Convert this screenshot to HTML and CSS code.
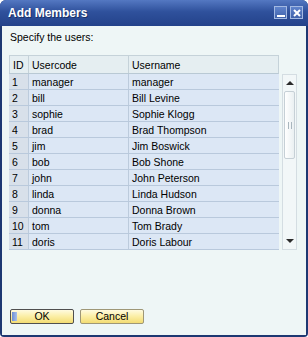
FILE: index.html
```html
<!DOCTYPE html>
<html lang="en">
<head>
    <meta charset="UTF-8">
    <title>Add Members</title>
    <link rel="stylesheet" href="styles.css">
</head>
<body>
    <div class="window">
        <div class="titlebar">
            <span class="title">Add Members</span>
            <div class="controls">
                <span class="ctl ctl-min"><span class="bar"></span></span>
                <span class="ctl ctl-close">
                    <svg width="8" height="8" viewBox="0 0 8 8"><path d="M1 1 L7 7 M7 1 L1 7" stroke="#fff" stroke-width="2"/></svg>
                </span>
            </div>
        </div>

        <div class="content">
            <p class="prompt">Specify the users:</p>

            <div class="grid">
                <div class="table">
                    <div class="row head">
                        <div class="cell id">ID</div>
                        <div class="cell code">Usercode</div>
                        <div class="cell name">Username</div>
                    </div>
                    <div class="row"><div class="cell id">1</div><div class="cell code">manager</div><div class="cell name">manager</div></div>
                    <div class="row"><div class="cell id">2</div><div class="cell code">bill</div><div class="cell name">Bill Levine</div></div>
                    <div class="row"><div class="cell id">3</div><div class="cell code">sophie</div><div class="cell name">Sophie Klogg</div></div>
                    <div class="row"><div class="cell id">4</div><div class="cell code">brad</div><div class="cell name">Brad Thompson</div></div>
                    <div class="row"><div class="cell id">5</div><div class="cell code">jim</div><div class="cell name">Jim Boswick</div></div>
                    <div class="row"><div class="cell id">6</div><div class="cell code">bob</div><div class="cell name">Bob Shone</div></div>
                    <div class="row"><div class="cell id">7</div><div class="cell code">john</div><div class="cell name">John Peterson</div></div>
                    <div class="row"><div class="cell id">8</div><div class="cell code">linda</div><div class="cell name">Linda Hudson</div></div>
                    <div class="row"><div class="cell id">9</div><div class="cell code">donna</div><div class="cell name">Donna Brown</div></div>
                    <div class="row"><div class="cell id">10</div><div class="cell code">tom</div><div class="cell name">Tom Brady</div></div>
                    <div class="row"><div class="cell id">11</div><div class="cell code">doris</div><div class="cell name">Doris Labour</div></div>
                </div>

                <div class="scrollbar">
                    <div class="arrow up"><span class="tri-up"></span></div>
                    <div class="thumb"><span class="grip"></span></div>
                    <div class="track"></div>
                    <div class="arrow down"><span class="tri-down"></span></div>
                </div>
            </div>

            <div class="buttons">
                <button class="btn btn-default"><span class="focus"></span>OK</button>
                <button class="btn">Cancel</button>
            </div>
        </div>
    </div>
</body>
</html>
```

FILE: styles.css
```css
body {
    margin: 0;
    background-color: #ffffff;
    font-family: "Liberation Sans", Arial, sans-serif;
}

.window {
    width: 308px;
    height: 337px;
    display: flex;
    flex-direction: column;
    background-color: #1d3872;
    border-radius: 6px 6px 4px 4px;
    box-sizing: border-box;
    padding: 0 2px 2px 2px;
}

.titlebar {
    height: 25px;
    margin: 0 -2px;
    display: flex;
    align-items: center;
    justify-content: space-between;
    padding: 0 5px 1px 8px;
    border-radius: 6px 6px 0 0;
    background: linear-gradient(#5478c2, #2f519c 45%, #23428a);
}

.title {
    color: #ffffff;
    font-weight: bold;
    font-size: 12px;
    text-shadow: 1px 1px 0 #1a3066;
}

.controls {
    display: flex;
    gap: 3px;
}

.ctl {
    width: 11px;
    height: 11px;
    border: 1px solid #a3b9e2;
    background: linear-gradient(#5f83cc, #4163ab);
    display: flex;
    align-items: center;
    justify-content: center;
}

.ctl-min {
    align-items: flex-end;
}

.ctl-min .bar {
    width: 8px;
    height: 2px;
    background-color: #ffffff;
    margin-bottom: 1px;
}

.content {
    flex: 1;
    display: flex;
    flex-direction: column;
    background-color: #eef6f6;
    padding: 4px 0 11px 7px;
}

.prompt {
    margin: 0 0 11px 1px;
    font-size: 10.5px;
    line-height: 14px;
    color: #000000;
}

.grid {
    display: flex;
    gap: 3px;
}

.table {
    width: 270px;
    font-size: 10.5px;
    color: #000000;
}

.row {
    display: flex;
    height: 16px;
    box-sizing: border-box;
    border-bottom: 1px solid #b9c9dc;
    background-color: #dce7f5;
}

.row.head {
    height: 19px;
    background-color: #e5eef1;
    border: 1px solid #c5d2d9;
    border-bottom-color: #b9c9d4;
}

.cell {
    display: flex;
    align-items: center;
    padding-left: 3px;
    box-sizing: border-box;
    white-space: nowrap;
    overflow: hidden;
}

.cell.id {
    width: 20px;
    background-color: #d8e0ea;
    border-right: 1px solid #bccbdc;
}

.row.head .cell.id {
    width: 19px;
    background-color: transparent;
    border-right-color: #c5d2d9;
}

.cell.code {
    width: 100px;
    border-right: 1px solid #bccbdc;
}

.row.head .cell.code {
    border-right-color: #c5d2d9;
}

.cell.name {
    flex: 1;
}

.scrollbar {
    width: 15px;
    margin-top: 19px;
    height: 176px;
    display: flex;
    flex-direction: column;
    border: 1px solid #d4dde2;
    box-sizing: border-box;
    background-color: #f2f7f8;
}

.arrow {
    height: 16px;
    display: flex;
    align-items: center;
    justify-content: center;
}

.tri-up {
    width: 0;
    height: 0;
    border-left: 4px solid transparent;
    border-right: 4px solid transparent;
    border-bottom: 4px solid #2a2a2a;
}

.tri-down {
    width: 0;
    height: 0;
    border-left: 4px solid transparent;
    border-right: 4px solid transparent;
    border-top: 4px solid #2a2a2a;
}

.thumb {
    height: 66px;
    margin: 0 1px;
    border: 1px solid #c6d0d6;
    border-radius: 2px;
    background: linear-gradient(90deg, #ffffff, #eaf0f2);
    display: flex;
    align-items: center;
    justify-content: center;
}

.grip {
    width: 5px;
    height: 7px;
    background-image: radial-gradient(circle, #a9b6be 0.8px, transparent 1px);
    background-size: 3px 2px;
}

.track {
    flex: 1;
}

.buttons {
    margin-top: auto;
    display: flex;
    gap: 6px;
    padding-left: 1px;
}

.btn {
    width: 64px;
    height: 15px;
    padding: 0;
    font-family: "Liberation Sans", Arial, sans-serif;
    font-size: 10.5px;
    color: #000000;
    border: 1px solid #9e9777;
    border-radius: 2px;
    background: linear-gradient(#fffbe0, #fbeea4 50%, #f3dc73);
    position: relative;
    line-height: 13px;
}

.btn-default {
    border-color: #4f4f4f;
}

.btn-default .focus {
    position: absolute;
    left: 1px;
    top: 2px;
    width: 5px;
    height: 9px;
    background: linear-gradient(90deg, #6d8fd4, #a9c0ea);
}
```
